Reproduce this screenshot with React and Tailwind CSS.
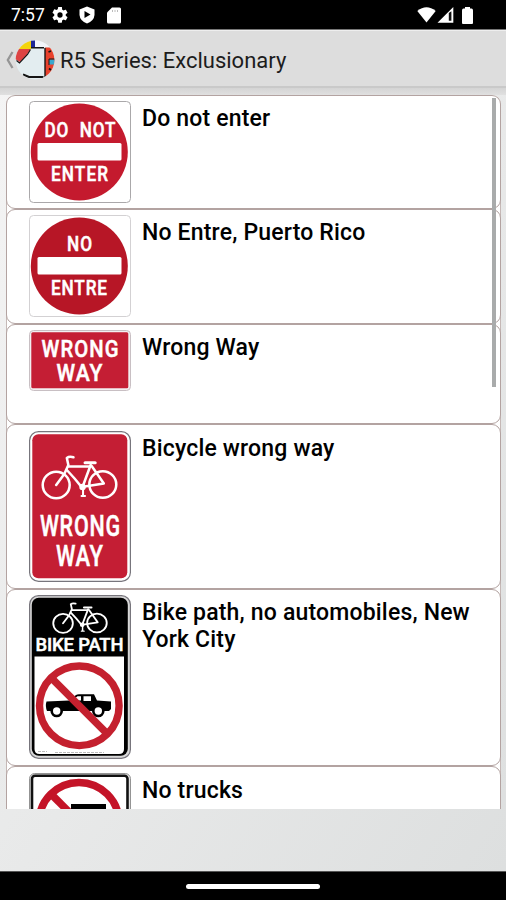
import React from "react";

const Bicycle = ({ x, y, width, height }) => (
  <svg x={x} y={y} width={width} height={height} viewBox="0 0 76 45" preserveAspectRatio="none">
    <g fill="none" stroke="#fff" strokeWidth="2.5" strokeLinecap="round" strokeLinejoin="round">
      <circle cx="15" cy="30" r="13.3" />
      <circle cx="61" cy="29.5" r="13.3" />
      <path d="M15 30 L23 19 L27 10 L25.5 3 Q28 1 32 2.3" />
      <path d="M27 11.5 L48 11.5" />
      <path d="M25.5 15 Q34 24 40 32 L62 28.5 L50 11" />
      <path d="M49 10 L41 32" />
      <path d="M43.5 7.8 L53.5 7.8" strokeWidth="3" />
      <path d="M41.5 32 V41 M40 41 L43.5 41" strokeWidth="2" />
    </g>
    <circle cx="41" cy="32" r="3.2" fill="#fff" />
  </svg>
);

// Sign lettering: narrowed glyphs, spaced out to the given width
const Lettering = ({ x, y, size, width, narrow = 0.84, children }) => (
  <g transform={`translate(${x} ${y}) scale(${narrow} 1)`}>
    <text
      fontFamily="Roboto"
      fontWeight="500"
      fontSize={size}
      fill="#fff"
      stroke="#fff"
      strokeWidth="0.5"
      textLength={width / narrow}
      lengthAdjust="spacing"
    >
      {children}
    </text>
  </g>
);

// Round red sign with the white bar
const EntrySign = ({ top, topX, topWidth, bottom, bottomWidth, frame, red }) => (
  <svg width="102" height="102" viewBox="0 0 102 102">
    <rect x="0.5" y="0.5" width="101" height="101" rx="4" fill="#fff" stroke={frame} />
    <circle cx="50.3" cy="51" r="48.5" fill={red} />
    <rect x="8.5" y="42" width="84" height="17.5" rx="1.5" fill="#fff" />
    <Lettering x={topX} y={35.5} size={19.5} width={topWidth} narrow={0.88}>{top}</Lettering>
    <Lettering x={22} y={80} size={19.5} width={bottomWidth} narrow={0.88}>{bottom}</Lettering>
  </svg>
);

const WrongWaySign = () => (
  <svg width="102" height="61" viewBox="0 0 102 61">
    <rect x="0.5" y="0.5" width="101" height="60" rx="4" fill="#f3eef0" stroke="#c8bfc3" />
    <rect x="2.3" y="2.3" width="97" height="56" rx="1.5" fill="#c41e34" />
    <Lettering x={12.5} y={26.5} size={23} width={77} narrow={0.88}>WRONG</Lettering>
    <Lettering x={27.5} y={50.5} size={23} width={46} narrow={0.92}>WAY</Lettering>
  </svg>
);

const BikeWrongWaySign = () => (
  <svg width="102" height="151" viewBox="0 0 102 151">
    <rect x="0.6" y="0.6" width="100.8" height="149.8" rx="9" fill="#fff" stroke="#77757c" strokeWidth="1.2" />
    <rect x="3.3" y="3.3" width="95" height="144" rx="6" fill="#c41e34" />
    <Bicycle x="12" y="24" width="77" height="45" />
    <Lettering x={11} y={104.5} size={29} width={80} narrow={0.74}>WRONG</Lettering>
    <Lettering x={27} y={134.5} size={29} width={47} narrow={0.76}>WAY</Lettering>
  </svg>
);

const BikePathSign = () => (
  <svg width="102" height="164" viewBox="0 0 102 164">
    <rect x="0.6" y="0.6" width="100.8" height="162.8" rx="9" fill="#d8d8d8" stroke="#77757c" strokeWidth="1.2" />
    <rect x="2.8" y="2.8" width="96" height="158" rx="7" fill="#000" />
    <path d="M5.5 61.5 H95 V154 Q95 159 90 159 H10.5 Q5.5 159 5.5 154 Z" fill="#fff" />
    <Bicycle x="23" y="7" width="56" height="32" />
    <Lettering x={6.5} y={56} size={19} width={88} narrow={0.97}>BIKE PATH</Lettering>
    {/* car */}
    <path d="M17.5 106.5 L40 105.5 L47 100 Q48 99.3 50 99.3 H65 L68 105.5 L82 106.5 V114 L80 116 H18 Q16 111 17.5 106.5 Z" fill="#000" />
    <path d="M43 105.5 L48.5 101.2 H52 V105.5 Z M54.5 101.2 H62 V106 H54.5 Z" fill="#fff" />
    <g fill="#fff" stroke="#000" strokeWidth="2.6">
      <circle cx="27.7" cy="116" r="5" />
      <circle cx="69.3" cy="116" r="5" />
    </g>
    <g fill="none" stroke="#c4202e" strokeWidth="7.4">
      <circle cx="50.3" cy="110.8" r="39.8" />
      <path d="M22.3 82.8 L78.3 138.8" />
    </g>
    <path d="M9 156.5 H18 M26 157.5 H75" stroke="#aaa" strokeWidth="0.8" strokeDasharray="3 1" />
  </svg>
);

const NoTrucksSign = () => (
  <svg width="102" height="102" viewBox="0 0 102 102">
    <rect x="0.6" y="0.6" width="100.8" height="100.8" rx="5" fill="#eee" stroke="#888" strokeWidth="1" />
    <rect x="3" y="2.8" width="95.5" height="96" rx="3" fill="#fff" stroke="#111" strokeWidth="2.6" />
    <rect x="42" y="31" width="35" height="26" fill="#000" />
    <g fill="none" stroke="#c41428" strokeWidth="7.5">
      <circle cx="50" cy="49.5" r="40" />
      <path d="M22 21 L78 77" />
    </g>
  </svg>
);

const signs = [
  {
    title: "Do not enter",
    rowClass: "h-[114px] pt-[5px]",
    sign: <EntrySign top={"DO\u00a0\u00a0NOT"} topX={15.5} topWidth={71} bottom="ENTER" bottomWidth={57} frame="#aaa8aa" red="#c41a2e" />,
  },
  {
    title: "No Entre, Puerto Rico",
    rowClass: "h-[115px] pt-[5px]",
    sign: <EntrySign top="NO" topX={38} topWidth={25} bottom="ENTRE" bottomWidth={56} frame="#d3d1d3" red="#b71626" />,
  },
  { title: "Wrong Way", rowClass: "h-[100px] pt-[5px]", sign: <WrongWaySign /> },
  { title: "Bicycle wrong way", rowClass: "h-[165px] pt-[6px]", sign: <BikeWrongWaySign /> },
  {
    title: "Bike path, no automobiles, New York City",
    rowClass: "h-[177px] pt-[5px]",
    sign: <BikePathSign />,
  },
  { title: "No trucks", rowClass: "h-[115px] pt-[6px]", sign: <NoTrucksSign /> },
];

const StatusBar = () => (
  <div className="flex h-[30px] shrink-0 items-center border-b border-[#777] bg-black pl-[11px] pt-px text-white">
    <span className="w-[41px] pt-[2px] text-[17.5px] leading-none">7:57</span>
    <svg width="16" height="16" viewBox="2 2 20 20" fill="#fff">
      <path d="M19.14 12.94c.04-.3.06-.61.06-.94s-.02-.64-.07-.94l2.03-1.58a.49.49 0 0 0 .12-.61l-1.92-3.32a.49.49 0 0 0-.59-.22l-2.39.96a7 7 0 0 0-1.62-.94l-.36-2.54A.48.48 0 0 0 13.92 2h-3.84a.48.48 0 0 0-.47.41l-.36 2.54c-.59.24-1.13.57-1.62.94l-2.39-.96a.49.49 0 0 0-.59.22L2.74 8.87a.48.48 0 0 0 .12.61l2.03 1.58c-.05.3-.09.63-.09.94s.02.64.07.94l-2.03 1.58a.49.49 0 0 0-.12.61l1.92 3.32c.12.22.37.29.59.22l2.39-.96c.5.38 1.03.7 1.62.94l.36 2.54c.05.24.24.41.48.41h3.84c.24 0 .44-.17.47-.41l.36-2.54c.59-.24 1.13-.56 1.62-.94l2.39.96c.22.08.47 0 .59-.22l1.92-3.32a.48.48 0 0 0-.12-.61zM12 15.3a3.3 3.3 0 1 1 0-6.6 3.3 3.3 0 0 1 0 6.6z" />
    </svg>
    <svg className="ml-[11px]" width="16" height="18" viewBox="0 0 16 18">
      <path d="M8 0.5 L15.5 3.5 V9 Q15 15 8 17.5 Q1 15 0.5 9 V3.5 Z" fill="#fff" />
      <path d="M5.5 5 L11.5 8.5 L5.5 12 Z" fill="#000" />
    </svg>
    <svg className="ml-[12px]" width="14" height="17" viewBox="0 0 14 17">
      <path d="M5 0.5 H12.5 Q14 0.5 14 2 V15 Q14 16.5 12.5 16.5 H1.5 Q0 16.5 0 15 V5.5 Z" fill="#fff" />
      <path d="M5.5 3 V5 M8 3 V5 M10.5 3 V5" stroke="#bbb" strokeWidth="1" />
    </svg>
    <div className="ml-auto flex items-center pr-[33px]">
      <svg width="19" height="16" viewBox="0 0 19 16">
        <path d="M0.3 4 Q9.5 -3.5 18.7 4 L9.5 15.5 Z" fill="#fff" />
      </svg>
      <svg className="ml-px" width="17" height="16" viewBox="0 0 17 16">
        <path d="M16.3 0 V15.7 H0.5 Z" fill="#fff" />
        <path d="M11.8 6 L14.4 4.2 V13.7 H11.8 Z" fill="#111" />
      </svg>
      <svg className="ml-[8px]" width="11" height="17" viewBox="0 0 11 17">
        <path d="M3 0 H8 V1.5 H9.5 Q11 1.5 11 3.5 V16 Q11 17 10 17 H1 Q0 17 0 16 V3.5 Q0 1.5 1.5 1.5 H3 Z" fill="#fff" />
      </svg>
    </div>
  </div>
);

const AppIcon = () => (
  <svg width="40" height="40" viewBox="0 0 40 40">
    <defs>
      <clipPath id="disc">
        <circle cx="20" cy="20" r="19.4" />
      </clipPath>
    </defs>
    <g clipPath="url(#disc)">
      <rect width="40" height="40" fill="#e3edf0" />
      <path d="M0 0 H16 V9 H0 Z" fill="#f3d40c" />
      <path d="M20 0 H40 V7 H20 Z" fill="#f3f5fa" />
      <rect x="16" y="0" width="4" height="8" fill="#1d2697" />
      <path d="M0 9 H15.5 L12 14.5 L5 22 L0 19 Z" fill="#dd4444" />
      <path d="M15.5 9.5 L12.5 14.5 L4.5 23 L1.5 20.5" fill="none" stroke="#161616" strokeWidth="1.2" />
      <path d="M16 7.8 H29" stroke="#161616" strokeWidth="1.6" />
      <rect x="30" y="7.5" width="10" height="28.5" fill="#e8412c" />
      <path d="M30 8 V37" stroke="#161616" strokeWidth="1.4" />
      <rect x="34" y="19.5" width="7" height="5" fill="#38a8cf" />
      <path d="M34 19 H40 M34 19 V25" stroke="#161616" strokeWidth="1" />
      <path d="M33.5 12 L36 11 M34 28.5 L36 30" stroke="#161616" strokeWidth="1.8" />
      <path d="M8 34.5 L14 37 H28.5" fill="none" stroke="#161616" strokeWidth="2.2" />
    </g>
  </svg>
);

const App = () => {
  return (
    <div className="flex h-[900px] w-[506px] flex-col overflow-hidden bg-black font-[Roboto,sans-serif]">
      <StatusBar />

      {/* Action bar */}
      <header className="flex h-[58px] shrink-0 items-center border-t border-b-2 border-t-[#eee] border-b-[#c9c9c9] bg-[#dddddd] pl-[6px] pt-[2px]">
        <svg width="9" height="18" viewBox="0 0 9 18">
          <path d="M6.5 1 L1.8 9 L6.5 17" fill="none" stroke="#959595" strokeWidth="2.3" />
        </svg>
        <AppIcon />
        <h1 className="ml-[5px] mt-[2px] whitespace-nowrap text-[22px] font-normal leading-none text-[#1c1c1c]">
          R5 Series: Exclusionary
        </h1>
      </header>

      <main className="min-h-0 flex-1 bg-linear-to-br from-[#f4f4f4] to-[#dddfdf]">
        <div className="h-[7px] bg-linear-to-b from-[#d4d4d4] to-[#e0e0e0]" />
        <div className="relative ml-[6px] h-[714px] w-[495px] overflow-hidden rounded-t-[9px] bg-white shadow-[inset_0_0_0_1px_#c5b8b6]">
          {signs.map(({ title, rowClass, sign }) => (
            <div
              key={title}
              className={`flex rounded-[9px] border border-[#b3a3a1] bg-white pl-[22px] ${rowClass}`}
            >
              <div className="w-[113px] shrink-0">{sign}</div>
              <h2 className="mt-[4px] text-[23px] font-medium leading-[27px] tracking-[0.18px] text-black">{title}</h2>
            </div>
          ))}
          <div className="absolute right-[5px] top-[3px] h-[289px] w-[4px] bg-[#a9abab]" />
        </div>
      </main>

      {/* Gesture bar */}
      <footer className="flex h-[29px] shrink-0 items-center justify-center border-t border-[#555] bg-black">
        <div className="h-[5px] w-[134px] rounded-sm bg-white" />
      </footer>
    </div>
  );
};

export default App;
